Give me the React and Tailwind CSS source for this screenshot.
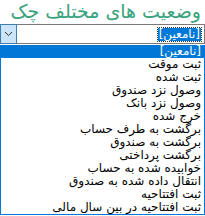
import React from "react";

const items = [
  "[نامعین]",
  "ثبت موقت",
  "ثبت شده",
  "وصول نزد صندوق",
  "وصول نزد بانک",
  "خرج شده",
  "برگشت به طرف حساب",
  "برگشت به صندوق",
  "برگشت پرداختی",
  "خوابیده شده به حساب",
  "انتقال داده شده به صندوق",
  "ثبت افتتاحیه",
  "ثبت افتتاحیه در بین سال مالی",
];

export default function App() {
  return (
    <div
      dir="rtl"
      className="w-[205px] h-[216px] overflow-hidden bg-white font-['DejaVu_Sans',sans-serif]"
    >
      <div className="h-[24px] pr-[4px] text-[19px] leading-[23px] text-[#38a37c] whitespace-nowrap">
        وضعیت های مختلف چک
      </div>
      <div className="h-[20px] border border-[#7a7a7a] flex items-center justify-between">
        <span className="mr-[3px] px-[1px] bg-[#0078d7] text-white text-[12px] leading-[13px] outline outline-1 outline-dotted outline-[#333]">
          {items[0]}
        </span>
        <div className="w-[17px] h-[20px] -my-px -ml-px bg-[#cce4f7] border border-[#3c7fb1] flex items-center justify-center">
          <svg width="9" height="6" viewBox="0 0 9 6">
            <path d="M1 1l3.5 3.5L8 1" fill="none" stroke="#333" strokeWidth="1" />
          </svg>
        </div>
      </div>
      <div className="mt-px border border-[#0078d7] border-t-0">
        {items.map((item, i) => (
          <div
            key={i}
            className={`h-[13px] px-[3px] text-[12px] leading-[13px] whitespace-nowrap ${
              i === 0 ? "bg-[#0078d7] text-white" : "text-black"
            }`}
          >
            {item}
          </div>
        ))}
      </div>
    </div>
  );
}
